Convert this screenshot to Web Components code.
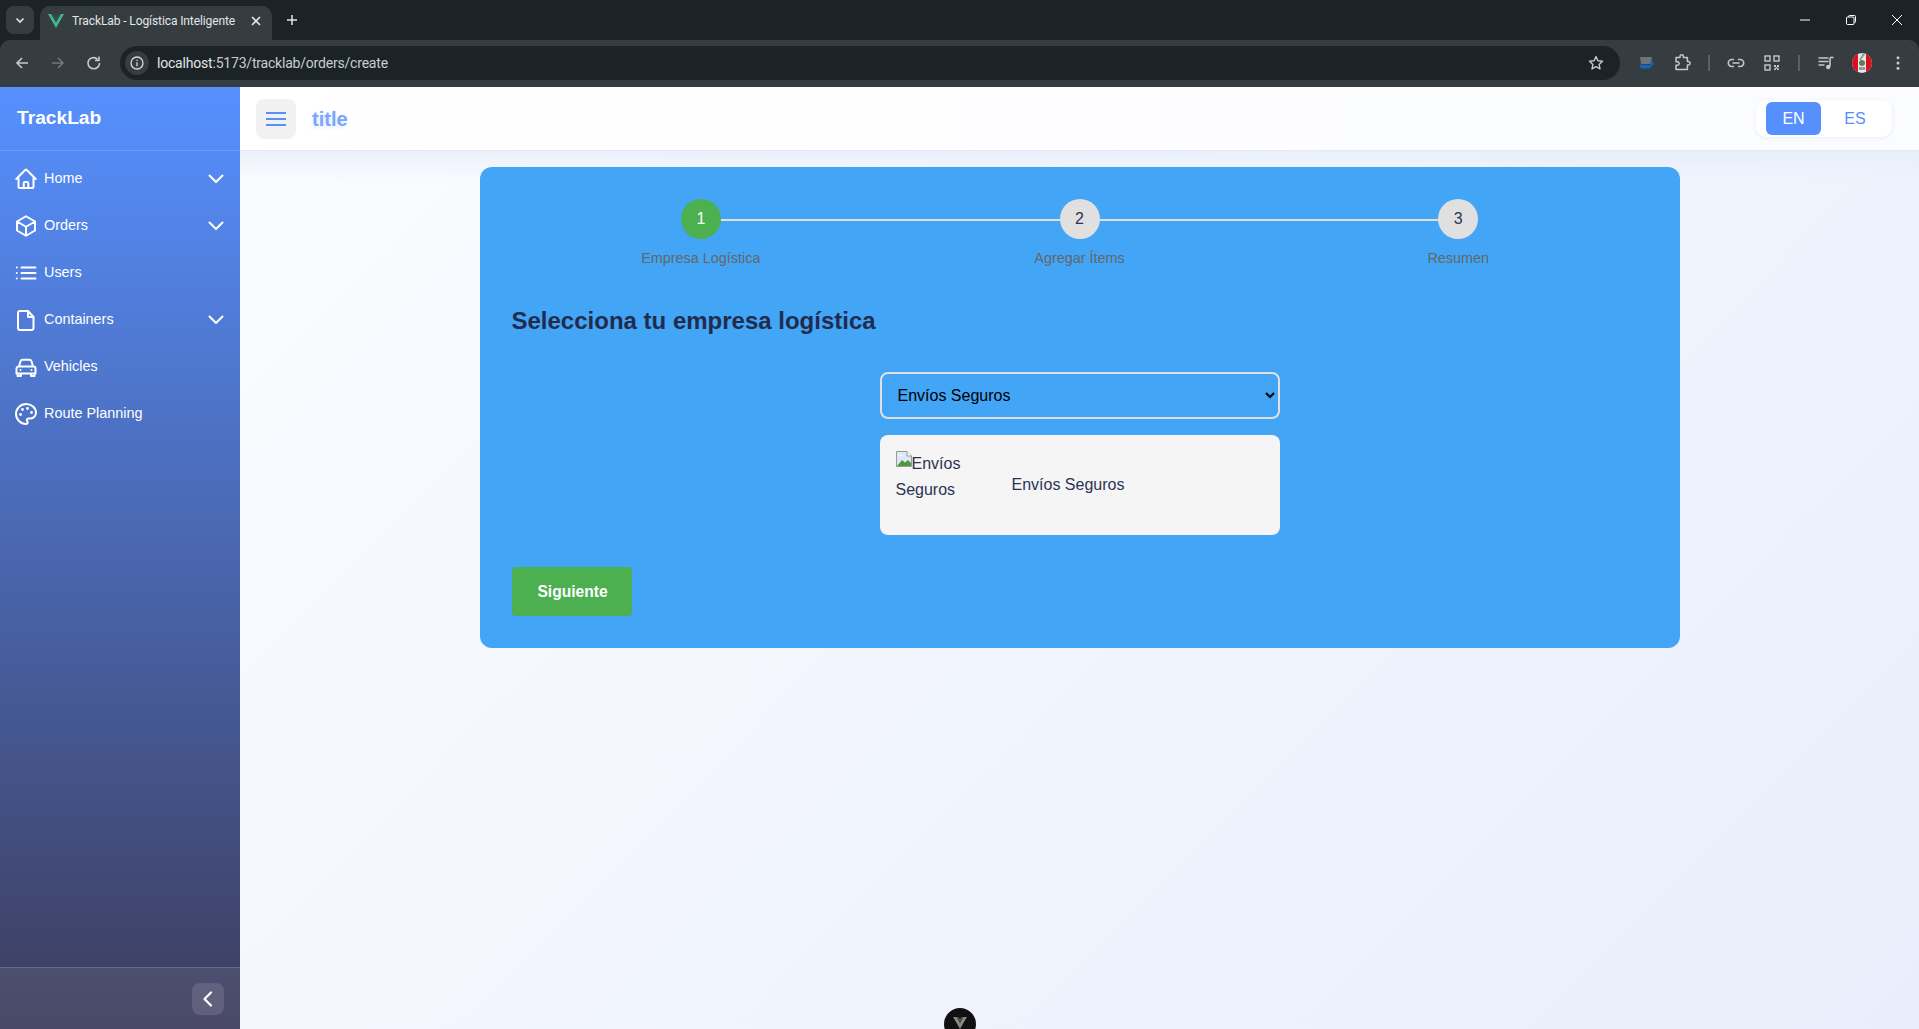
<!DOCTYPE html>
<html lang="es">
<head>
<meta charset="utf-8">
<title>TrackLab - Logística Inteligente</title>
<style>
    html, body { margin: 0; height: 100%; overflow: hidden; }
    body { font-family: "Liberation Sans", Arial, sans-serif; }
</style>
</head>
<body>
<app-shell>
    <browser-chrome slot="chrome"></browser-chrome>
    <side-nav slot="nav">
        <nav-item icon="home" chevron>Home</nav-item>
        <nav-item icon="cube" chevron>Orders</nav-item>
        <nav-item icon="list">Users</nav-item>
        <nav-item icon="file" chevron>Containers</nav-item>
        <nav-item icon="car">Vehicles</nav-item>
        <nav-item icon="palette">Route Planning</nav-item>
    </side-nav>
    <top-bar slot="top"></top-bar>
    <order-card slot="main">
        <order-stepper>
            <step-item num="1" active line>Empresa Logística</step-item>
            <step-item num="2" line>Agregar Ítems</step-item>
            <step-item num="3">Resumen</step-item>
        </order-stepper>
        <company-picker></company-picker>
    </order-card>
</app-shell>

<script>
const stroke = (d, w = 2) => `<path d="${d}" fill="none" stroke="currentColor" stroke-width="${w}" stroke-linecap="round" stroke-linejoin="round"/>`;

const navIcons = {
    home: stroke('M2.25 12l8.954-8.955c.44-.439 1.152-.439 1.591 0L21.75 12M4.5 9.75v10.125c0 .621.504 1.125 1.125 1.125H9.75v-4.875c0-.621.504-1.125 1.125-1.125h2.25c.621 0 1.125.504 1.125 1.125V21h4.125c.621 0 1.125-.504 1.125-1.125V9.75M8.25 21h8.25'),
    cube: stroke('M21 7.5l-9-5.25L3 7.5m18 0l-9 5.25m9-5.25v9l-9 5.25M3 7.5l9 5.25M3 7.5v9l9 5.25m0-9v9'),
    list: stroke('M7.5 6.5h14M7.5 12h14M7.5 17.5h14M2.8 6.5h.01M2.8 12h.01M2.8 17.5h.01'),
    file: stroke('M6 3h8l5.5 6v11a2 2 0 01-2 2H6a2 2 0 01-2-2V5a2 2 0 012-2zM14 3v6h5.5'),
    car: stroke('M5 11.5l1.4-5A2.5 2.5 0 018.8 4.8h6.4a2.5 2.5 0 012.4 1.7l1.4 5M4.5 11.5h15a2 2 0 012 2v5h-19v-5a2 2 0 012-2zM3.5 18.5V21h3.5v-2.5M17 18.5V21h3.5v-2.5M6.5 15h.01M17.5 15h.01'),
    palette: stroke('M12 2C6.5 2 2 6.5 2 12s4.5 10 10 10c.926 0 1.648-.746 1.648-1.688 0-.437-.18-.835-.437-1.125-.29-.289-.438-.652-.438-1.125a1.64 1.64 0 0 1 1.668-1.668h1.996c3.051 0 5.555-2.503 5.555-5.554C21.965 6.012 17.461 2 12 2z')
        + '<g fill="currentColor"><circle cx="13.5" cy="6.5" r="1.4"/><circle cx="17.5" cy="10.5" r="1.4"/><circle cx="8.5" cy="7.5" r="1.4"/><circle cx="6.5" cy="12.5" r="1.4"/></g>'
};

class AppShell extends HTMLElement {
    constructor() {
        super();
        this.attachShadow({ mode: 'open' });
        this.shadowRoot.innerHTML = `
            <style>
                :host { display: flex; flex-direction: column; height: 1029px; }
                .body { flex: 1; display: flex; min-height: 0; position: relative; }
                .content {
                    flex: 1; display: flex; flex-direction: column; min-width: 0;
                    background: linear-gradient(135deg, #fbfcff 0%, #e8eefb 100%);
                }
                main {
                    flex: 1; display: flex; justify-content: center; align-items: flex-start; padding-top: 16px;
                    background: linear-gradient(180deg, rgba(230,237,251,.75) 0, rgba(230,237,251,0) 30px);
                }
                .devtools {
                    position: absolute; left: 944px; top: 921px; width: 32px; height: 32px;
                    border-radius: 50%; background: #111; display: flex; justify-content: center; padding-top: 9px; box-sizing: border-box;
                }
            </style>
            <slot name="chrome"></slot>
            <div class="body">
                <slot name="nav"></slot>
                <div class="content">
                    <slot name="top"></slot>
                    <main><slot name="main"></slot></main>
                </div>
                <div class="devtools">
                    <svg width="14" height="12" viewBox="0 0 16 14"><path d="M0 0h4l4 7 4-7h4L8 14z" fill="#8a8a8a"/><path d="M4 0h2.2L8 3l1.8-3H12L8 7z" fill="#555"/></svg>
                </div>
            </div>`;
    }
}

class BrowserChrome extends HTMLElement {
    constructor() {
        super();
        this.attachShadow({ mode: 'open' });
        this.shadowRoot.innerHTML = `
            <style>
                :host { display: block; font-family: Roboto, "Noto Sans", sans-serif; color: #e3e6e7; background: #1b2327; }
                svg { display: block; }
                .strip { height: 40px; display: flex; align-items: flex-end; padding-left: 6px; box-sizing: border-box; }
                .tab-search {
                    width: 28px; height: 28px; margin-bottom: 6px; border-radius: 8px; background: #353d40;
                    display: flex; align-items: center; justify-content: center;
                }
                .tab {
                    width: 232px; height: 34px; margin-left: 6px; background: #353d40; border-radius: 10px 10px 0 0;
                    display: flex; align-items: center; padding: 0 8px 5px; box-sizing: border-box; font-size: 12px; letter-spacing: -.1px;
                }
                .tab span { margin-left: 8px; flex: 1; white-space: nowrap; overflow: hidden; }
                .new { margin: 0 0 6px 10px; width: 20px; height: 28px; display: flex; align-items: center; justify-content: center; }
                .win { margin-left: auto; align-self: flex-start; display: flex; }
                .win div { width: 46px; height: 40px; display: flex; align-items: center; justify-content: center; }
                .win div:last-child { margin-right: -1px; }
                .bar { height: 47px; background: #353d40; display: flex; align-items: center; padding: 0 3px 1px 4px; border-radius: 10px 10px 0 0; box-sizing: border-box; }
                .ico { width: 36px; height: 36px; flex: none; display: flex; align-items: center; justify-content: center; color: #c5c9ca; }
                .ico.off { color: #71777a; }
                .omni {
                    flex: 1; height: 34px; margin: 0 8px; background: #1b2327; border-radius: 17px;
                    display: flex; align-items: center; padding-left: 5px; font-size: 14px; letter-spacing: -.2px;
                }
                .info { width: 24px; height: 24px; border-radius: 50%; background: #353d40; display: flex; align-items: center; justify-content: center; margin-right: 8px; }
                .omni b { font-weight: 400; color: #c9cdcf; }
                .omni .star { margin-left: auto; margin-right: 16px; color: #c5c9ca; }
                .puzzle { margin-left: 2px; }
                .sep { width: 18px; display: flex; justify-content: center; flex: none; }
                .sep i { width: 2px; height: 16px; background: #5a6164; }
            </style>
            <div class="strip">
                <div class="tab-search"><svg width="12" height="12" viewBox="0 0 12 12"><path d="M2.5 4.5L6 8l3.5-3.5" fill="none" stroke="#e3e6e7" stroke-width="1.6"/></svg></div>
                <div class="tab">
                    <svg width="16" height="14" viewBox="0 0 16 14"><path d="M0 0h3.2L8 8.3 12.8 0H16L8 14z" fill="#41b883"/><path d="M3.2 0h2.6L8 3.8 10.2 0h2.6L8 8.3z" fill="#35495e"/></svg>
                    <span>TrackLab - Logística Inteligente</span>
                    <svg width="16" height="16" viewBox="0 0 16 16"><path d="M4 4l8 8M12 4l-8 8" stroke="#e3e6e7" stroke-width="1.6"/></svg>
                </div>
                <div class="new"><svg width="14" height="14" viewBox="0 0 14 14"><path d="M7 2v10M2 7h10" stroke="#e3e6e7" stroke-width="1.5"/></svg></div>
                <div class="win">
                    <div><svg width="12" height="12" viewBox="0 0 12 12"><path d="M1 6h10" stroke="#fff"/></svg></div>
                    <div><svg width="12" height="12" viewBox="0 0 12 12"><rect x="1.5" y="3" width="7.5" height="7.5" rx="1" fill="none" stroke="#fff"/><path d="M3.5 3V2.5a1 1 0 011-1h5a1 1 0 011 1v5a1 1 0 01-1 1H9" fill="none" stroke="#fff"/></svg></div>
                    <div><svg width="12" height="12" viewBox="0 0 12 12"><path d="M1 1l10 10M11 1L1 11" stroke="#fff"/></svg></div>
                </div>
            </div>
            <div class="bar">
                <div class="ico"><svg width="16" height="16" viewBox="0 0 16 16"><path d="M14 8H3M8 3L3 8l5 5" fill="none" stroke="currentColor" stroke-width="1.6"/></svg></div>
                <div class="ico off"><svg width="16" height="16" viewBox="0 0 16 16"><path d="M2 8h11M8 3l5 5-5 5" fill="none" stroke="currentColor" stroke-width="1.6"/></svg></div>
                <div class="ico"><svg width="16" height="16" viewBox="0 0 16 16"><path d="M13.5 8A5.5 5.5 0 112 8a5.5 5.5 0 019.5-3.6M13 1.5v4H9" fill="none" stroke="currentColor" stroke-width="1.6"/></svg></div>
                <div class="omni">
                    <div class="info"><svg width="14" height="14" viewBox="0 0 14 14"><circle cx="7" cy="7" r="6" fill="none" stroke="#d5d8d9" stroke-width="1.3"/><path d="M7 6.2v4M7 3.8v1.2" stroke="#d5d8d9" stroke-width="1.3"/></svg></div>
                    <span>localhost<b>:5173/tracklab/orders/create</b></span>
                    <svg class="star" width="16" height="16" viewBox="0 0 16 16"><path d="M8 1.6l1.9 4.2 4.6.5-3.4 3.1.9 4.5-4-2.3-4 2.3.9-4.5L1.5 6.3l4.6-.5z" fill="none" stroke="currentColor" stroke-width="1.4" stroke-linejoin="round"/></svg>
                </div>
                <div class="ico"><svg width="16" height="16" viewBox="0 0 16 16"><path d="M2 2h12l-1.5 7H3z" fill="#6d7478"/><path d="M14.5 3.5L12.5 10 1.5 9.5l1.5 4h8.5L15.5 9z" fill="#1565c0"/></svg></div>
                <div class="ico"><svg class="puzzle" width="20" height="20" viewBox="0 0 20 20"><path d="M3 4.5h4V3.4a1.7 1.7 0 013.4 0v1.1h4v4h1a1.7 1.7 0 010 3.4h-1v4.6H3v-4.2h1.3a1.8 1.8 0 000-3.6H3z" fill="none" stroke="currentColor" stroke-width="1.5" stroke-linejoin="round"/></svg></div>
                <div class="sep"><i></i></div>
                <div class="ico"><svg width="18" height="18" viewBox="0 0 18 18"><path d="M7 5.5H4.8a3.5 3.5 0 000 7H7M11 5.5h2.2a3.5 3.5 0 010 7H11M5.5 9h7" fill="none" stroke="currentColor" stroke-width="1.6"/></svg></div>
                <div class="ico"><svg width="16" height="16" viewBox="0 0 16 16"><g fill="none" stroke="currentColor" stroke-width="1.4"><rect x="1" y="1" width="5" height="5"/><rect x="10" y="1" width="5" height="5"/><rect x="1" y="10" width="5" height="5"/></g><path d="M10 10h2v2h-2zM13 10h2v2h-2zM11.5 12h2v1.5h-2zM10 13.5h2V15h-2zM13 13.5h2V15h-2z" fill="currentColor"/></svg></div>
                <div class="sep"><i></i></div>
                <div class="ico"><svg width="18" height="18" viewBox="0 0 18 18"><path d="M1.5 4h10M1.5 7.5h10M1.5 11h6" stroke="currentColor" stroke-width="1.4"/><path d="M13 4v8.5" stroke="currentColor" stroke-width="1.6"/><path d="M13 3.5h3.5" stroke="currentColor" stroke-width="1.6"/><circle cx="11.2" cy="13" r="2.2" fill="currentColor"/></svg></div>
                <div class="ico"><svg width="20" height="20" viewBox="0 0 20 20"><defs><clipPath id="av"><circle cx="10" cy="10" r="10"/></clipPath></defs><g clip-path="url(#av)"><rect width="20" height="20" fill="#e8e8e8"/><rect width="6" height="20" fill="#d91023"/><rect x="14" width="6" height="20" fill="#d91023"/><path d="M11 0h3L9 7H7z" fill="#9a9a9a"/><circle cx="10" cy="10" r="3" fill="#5f7f4e"/><path d="M7 14h6v3H7z" fill="#999"/></g></svg></div>
                <div class="ico"><svg width="16" height="16" viewBox="0 0 16 16"><circle cx="8" cy="2.8" r="1.5" fill="currentColor"/><circle cx="8" cy="8" r="1.5" fill="currentColor"/><circle cx="8" cy="13.2" r="1.5" fill="currentColor"/></svg></div>
            </div>`;
    }
}

class SideNav extends HTMLElement {
    constructor() {
        super();
        this.attachShadow({ mode: 'open' });
        this.shadowRoot.innerHTML = `
            <style>
                :host {
                    display: flex; flex-direction: column; width: 240px; flex: none; color: #fff;
                    background: linear-gradient(180deg, #5690ff 0%, #3d3c5c 100%);
                }
                .brand { height: 64px; padding: 0 0 2px 17px; display: flex; align-items: center; box-sizing: border-box; font-size: 19.2px; font-weight: 700; border-bottom: 1px solid rgba(255,255,255,.16); }
                nav { flex: 1; padding-top: 4px; }
                .foot {
                    height: 62px; box-sizing: border-box; border-top: 1px solid rgba(255,255,255,.16); background: rgba(255,255,255,.07);
                    display: flex; justify-content: flex-end; align-items: center; padding-right: 16px;
                }
                .collapse { width: 32px; height: 32px; border-radius: 8px; background: rgba(255,255,255,.12); display: flex; align-items: center; justify-content: center; }
            </style>
            <div class="brand">TrackLab</div>
            <nav><slot></slot></nav>
            <div class="foot">
                <div class="collapse"><svg width="20" height="20" viewBox="0 0 20 20"><path d="M13 3.5L6.5 10l6.5 6.5" fill="none" stroke="#fff" stroke-width="2.2" stroke-linecap="round" stroke-linejoin="round"/></svg></div>
            </div>`;
    }
}

class NavItem extends HTMLElement {
    connectedCallback() {
        if (this.shadowRoot) return;
        this.attachShadow({ mode: 'open' });
        const chevron = this.hasAttribute('chevron')
            ? `<svg class="chev" width="24" height="24" viewBox="0 0 24 24">${stroke('M5.5 8.5L12 15l6.5-6.5', 2)}</svg>`
            : '';
        this.shadowRoot.innerHTML = `
            <style>
                :host { display: flex; align-items: center; height: 47px; padding: 0 12px 0 14px; font-size: 14.4px; color: #fff; }
                svg { display: block; flex: none; }
                .label { margin-left: 6px; flex: 1; position: relative; top: -1px; }
            </style>
            <svg width="24" height="24" viewBox="0 0 24 24">${navIcons[this.getAttribute('icon')]}</svg>
            <span class="label"><slot></slot></span>
            ${chevron}`;
    }
}

class TopBar extends HTMLElement {
    constructor() {
        super();
        this.attachShadow({ mode: 'open' });
        this.shadowRoot.innerHTML = `
            <style>
                :host {
                    display: flex; align-items: center; height: 64px; flex: none; box-sizing: border-box; padding: 0 27px 0 16px;
                    background: linear-gradient(90deg, #ffffff, #fbfcff); border-bottom: 1px solid #e4e9f5;
                }
                .burger { width: 40px; height: 40px; border-radius: 8px; background: #f1f1f1; display: flex; align-items: center; justify-content: center; }
                h1 { margin: 2px 0 0 16px; font-size: 20px; font-weight: 700; color: #7ca6fb; text-shadow: 0 2px 4px rgba(86,144,255,.2); }
                .lang { margin-left: auto; width: 136px; height: 37px; box-sizing: border-box; padding: 2px 3px 2px 10px; background: #fff; border-radius: 10px; box-shadow: 0 1px 4px rgba(60,90,160,.1); display: flex; }
                .lang div { flex: 1; display: flex; align-items: center; justify-content: center; font-size: 16px; color: #5690ff; border-radius: 6px; }
                .lang .on { flex: none; width: 55px; background: #5690ff; color: #fff; }
            </style>
            <div class="burger"><svg width="20" height="20" viewBox="0 0 20 20"><path d="M0 4h20M0 10h20M0 16h20" stroke="#5690ff" stroke-width="2"/></svg></div>
            <h1>title</h1>
            <div class="lang"><div class="on">EN</div><div>ES</div></div>`;
    }
}

class OrderCard extends HTMLElement {
    constructor() {
        super();
        this.attachShadow({ mode: 'open' });
        this.shadowRoot.innerHTML = `
            <style>
                :host { display: block; width: 1200px; height: 481px; box-sizing: border-box; padding: 32px; background: #42a5f6; border-radius: 12px; }
            </style>
            <slot></slot>`;
    }
}

class OrderStepper extends HTMLElement {
    constructor() {
        super();
        this.attachShadow({ mode: 'open' });
        this.shadowRoot.innerHTML = `
            <style>
                :host { display: flex; margin-bottom: 40px; }
            </style>
            <slot></slot>`;
    }
}

class StepItem extends HTMLElement {
    connectedCallback() {
        if (this.shadowRoot) return;
        this.attachShadow({ mode: 'open' });
        const active = this.hasAttribute('active');
        this.shadowRoot.innerHTML = `
            <style>
                :host { flex: 1; display: flex; flex-direction: column; align-items: center; position: relative; }
                .dot {
                    width: 40px; height: 40px; border-radius: 50%; position: relative; z-index: 1;
                    display: flex; align-items: center; justify-content: center; font-size: 16px;
                    background: ${active ? '#4caf50' : '#e0e0e0'}; color: ${active ? '#fff' : '#2c3454'};
                }
                .line { position: absolute; left: 50%; width: 100%; top: 20px; height: 2px; background: #e0e0e0; }
                .label { margin-top: 11px; font-size: 14.4px; line-height: 17px; color: #666; }
            </style>
            ${this.hasAttribute('line') ? '<div class="line"></div>' : ''}
            <div class="dot">${this.getAttribute('num')}</div>
            <div class="label"><slot></slot></div>`;
    }
}

class CompanyPicker extends HTMLElement {
    constructor() {
        super();
        this.attachShadow({ mode: 'open' });
        this.shadowRoot.innerHTML = `
            <style>
                :host { display: block; color: #2c3454; }
                h2 { margin: 0; font-size: 24px; line-height: 28px; font-weight: 700; color: #212c4d; }
                .col { width: 400px; margin: 37px auto 32px; }
                select {
                    display: block; width: 100%; height: 47px; padding: 0 12px; font: 16px "Liberation Sans", Arial, sans-serif; color: #000;
                    background: transparent; border: 2px solid #e0e0e0; border-radius: 8px; outline: none;
                }
                .company { margin-top: 16px; height: 100px; box-sizing: border-box; padding: 16px; background: #f5f5f5; border-radius: 8px; display: flex; align-items: center; gap: 16px; font-size: 16px; line-height: 25.6px; }
                .logo { width: 100px; height: 68px; flex: none; }
                .logo svg { vertical-align: 2px; }
                button { display: block; width: 120px; height: 49px; border: 0; padding: 0 0 0 2px; border-radius: 4px; background: #4caf50; color: #fff; font: 700 15.6px "Liberation Sans", Arial, sans-serif; }
            </style>
            <h2>Selecciona tu empresa logística</h2>
            <div class="col">
                <select><option>Envíos Seguros</option></select>
                <div class="company">
                    <div class="logo"><svg width="16" height="16" viewBox="0 0 16 16"><path d="M.5.5H11L15.5 5v10.5H.5z" fill="#dfe8f6" stroke="#999"/><path d="M11 .5V5h4.5" fill="#fff" stroke="#999"/><path d="M1 15l5-6 3 2.5L12 9l3 3v3z" fill="#4f9b3a"/><path d="M2.5 5a2 1 0 014 0z" fill="#fff"/></svg>Envíos Seguros</div>
                    <span>Envíos Seguros</span>
                </div>
            </div>
            <button>Siguiente</button>`;
    }
}

customElements.define('app-shell', AppShell);
customElements.define('browser-chrome', BrowserChrome);
customElements.define('side-nav', SideNav);
customElements.define('nav-item', NavItem);
customElements.define('top-bar', TopBar);
customElements.define('order-card', OrderCard);
customElements.define('order-stepper', OrderStepper);
customElements.define('step-item', StepItem);
customElements.define('company-picker', CompanyPicker);
</script>
</body>
</html>
